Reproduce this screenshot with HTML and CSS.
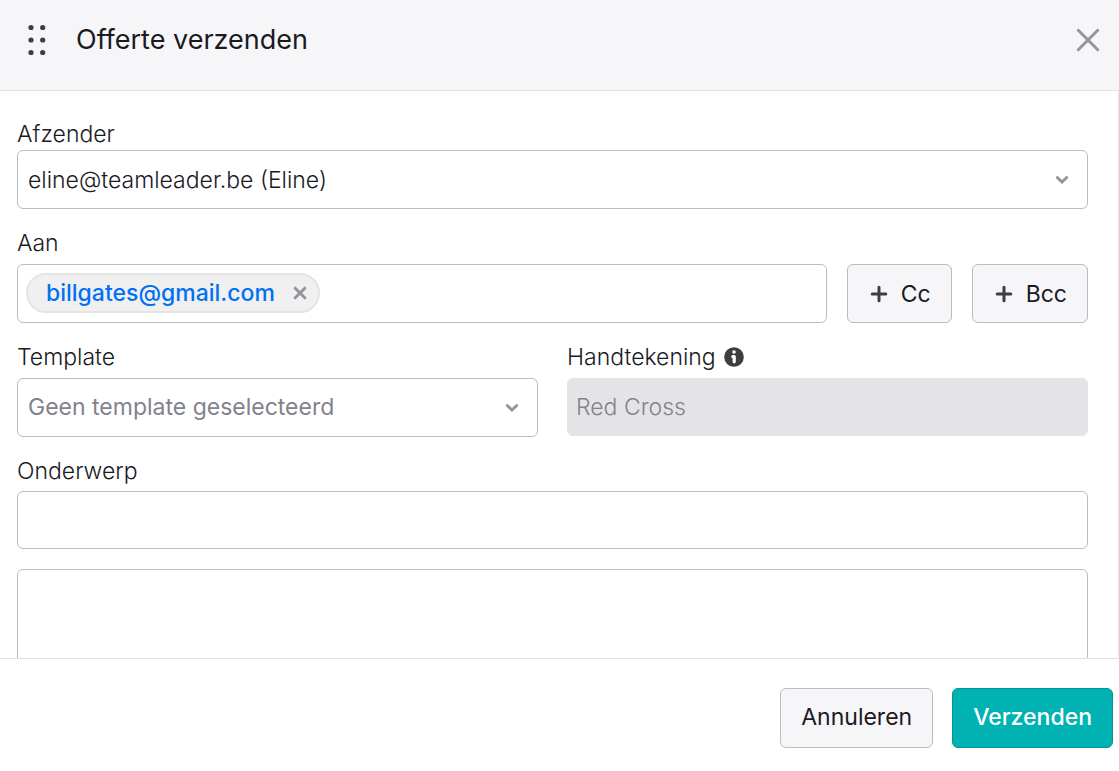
FILE: index.html
```html
<!DOCTYPE html>
<html lang="nl">
<head>
  <meta charset="utf-8">
  <meta name="viewport" content="width=device-width, initial-scale=1">
  <title>Offerte verzenden</title>
  <link rel="stylesheet" href="styles.css">
</head>
<body>
  <form class="dialog" aria-labelledby="dialog-title">
    <header class="dialog-header">
      <svg class="drag-handle" width="20" height="32" viewBox="0 0 20 32" fill="currentColor" aria-hidden="true">
        <circle cx="4" cy="3.5" r="2.6"/><circle cx="15.7" cy="3.5" r="2.6"/>
        <circle cx="4" cy="16" r="2.6"/><circle cx="15.7" cy="16" r="2.6"/>
        <circle cx="4" cy="28.5" r="2.6"/><circle cx="15.7" cy="28.5" r="2.6"/>
      </svg>
      <h1 class="dialog-title" id="dialog-title">Offerte verzenden</h1>
      <button class="icon-button" type="button" aria-label="Sluiten">
        <svg width="24" height="24" viewBox="0 0 24 24" fill="none" stroke="currentColor" stroke-width="3" stroke-linecap="round"><path d="M2.3 2.3 21.7 21.7M21.7 2.3 2.3 21.7"/></svg>
      </button>
    </header>

    <main class="dialog-body">
      <div class="field field-tight">
        <label class="label" for="sender">Afzender</label>
        <div class="select-wrap">
          <select class="control" id="sender"><option>eline@teamleader.be (Eline)</option></select>
          <svg class="chevron" width="14" height="10" viewBox="0 0 14 10" fill="none" stroke="currentColor" stroke-width="3" stroke-linecap="round"><path d="M2.3 2.5 7 7 11.7 2.5"/></svg>
        </div>
      </div>

      <div class="field">
        <label class="label" for="to">Aan</label>
        <div class="recipient-row">
          <div class="control recipients">
            <span class="chip">billgates@gmail.com
              <button class="chip-remove" type="button" aria-label="Verwijderen">
                <svg width="14" height="14" viewBox="0 0 14 14" fill="none" stroke="currentColor" stroke-width="3" stroke-linecap="round"><path d="M2.2 2.2 11.8 11.8M11.8 2.2 2.2 11.8"/></svg>
              </button>
            </span>
            <input class="recipient-input" id="to" type="email">
          </div>
          <button class="button button-add" type="button">
            <svg width="18" height="18" viewBox="0 0 18 18" fill="none" stroke="currentColor" stroke-width="3" stroke-linecap="round"><path d="M9 2.2V15.8M2.2 9H15.8"/></svg>
            Cc
          </button>
          <button class="button button-add" type="button">
            <svg width="18" height="18" viewBox="0 0 18 18" fill="none" stroke="currentColor" stroke-width="3" stroke-linecap="round"><path d="M9 2.2V15.8M2.2 9H15.8"/></svg>
            Bcc
          </button>
        </div>
      </div>

      <div class="columns">
        <div class="field">
          <label class="label" for="template">Template</label>
          <div class="select-wrap">
            <select class="control control-placeholder" id="template"><option>Geen template geselecteerd</option></select>
            <svg class="chevron" width="14" height="10" viewBox="0 0 14 10" fill="none" stroke="currentColor" stroke-width="3" stroke-linecap="round"><path d="M2.3 2.5 7 7 11.7 2.5"/></svg>
          </div>
        </div>
        <div class="field">
          <label class="label" for="signature">Handtekening
            <svg width="20" height="20" viewBox="0 0 20 20" aria-hidden="true"><circle cx="10" cy="10" r="9.8" fill="#3d3d42"/><circle cx="10" cy="5" r="1.8" fill="#fff"/><path d="M8.8 9.6H10.2V14.8" fill="none" stroke="#fff" stroke-width="3.2" stroke-linecap="round" stroke-linejoin="round"/></svg>
          </label>
          <input class="control" id="signature" type="text" value="Red Cross" disabled>
        </div>
      </div>

      <div class="field field-subject">
        <label class="label" for="subject">Onderwerp</label>
        <input class="control" id="subject" type="text">
      </div>
      <textarea class="control message" aria-label="Bericht"></textarea>
    </main>

    <footer class="dialog-footer">
      <button class="button" type="button">Annuleren</button>
      <button class="button button-primary" type="submit">Verzenden</button>
    </footer>
  </form>
</body>
</html>
```
FILE: styles.css
```css
* {
  box-sizing: border-box;
}

body {
  margin: 0;
  background: #fff;
  color: #1a1a1f;
  font: 300 23px/28px Inter, "Liberation Sans", sans-serif;
}

button,
input,
select,
textarea {
  margin: 0;
  font: inherit;
  color: inherit;
}

.dialog {
  display: flex;
  flex-direction: column;
  height: 100vh;
}

.dialog-header {
  display: flex;
  flex: none;
  align-items: center;
  padding: 24px 19px 34px 27px;
  border-bottom: 1px solid #e1e2e5;
  background: #f6f6f9;
}

.drag-handle {
  margin-right: 29px;
  color: #3d3d42;
}

.dialog-title {
  flex: 1;
  margin: 0;
  font-size: 27px;
  line-height: 32px;
  font-weight: 400;
}

.icon-button,
.chip-remove {
  display: flex;
  padding: 0;
  border: 0;
  background: none;
  color: #94949e;
}

.dialog-body {
  display: flex;
  flex: 1;
  flex-direction: column;
  gap: 20px;
  min-height: 0;
  overflow: hidden;
  padding: 29px 30px 0 17px;
  border-right: 1px solid #e8e8eb;
}

.field {
  display: flex;
  flex: none;
  flex-direction: column;
  gap: 7px;
  min-width: 0;
}

.field-tight {
  gap: 2px;
}

.field-subject {
  gap: 6px;
}

.label {
  display: flex;
  align-items: center;
  gap: 8px;
}

.control {
  width: 100%;
  height: 58px;
  padding: 0 10px;
  border: 1px solid #bcbcc0;
  border-radius: 6px;
  background: #fff;
}

.control:disabled {
  padding: 0 8px;
  border-color: #e4e4e6;
  background: #e4e4e6;
  color: #82828c;
}

.select-wrap {
  display: grid;
  align-items: center;
}

.select-wrap > * {
  grid-area: 1 / 1;
}

select.control {
  height: 59px;
  appearance: none;
}

select.control-placeholder {
  padding-bottom: 2px;
  color: #82828c;
  font-weight: 400;
}

.chevron {
  justify-self: end;
  margin-right: 19px;
  color: #94949e;
  pointer-events: none;
}

.recipient-row {
  display: flex;
  gap: 20px;
}

.recipients {
  display: flex;
  flex: 1;
  align-items: center;
  height: 59px;
  min-width: 0;
  padding: 0 8px 2px;
}

.chip {
  display: flex;
  align-items: center;
  gap: 18px;
  height: 40px;
  padding: 0 11px 0 18px;
  border: 2px solid #e4e4e6;
  border-radius: 20px;
  background: #f0f0f0;
  color: #0071f2;
  font-weight: 500;
}

.recipient-input {
  flex: 1;
  min-width: 0;
  border: 0;
  outline: 0;
  background: none;
}

.button {
  display: flex;
  align-items: center;
  justify-content: center;
  height: 60px;
  padding: 0 20px 2px;
  border: 1px solid #bcbcc0;
  border-radius: 6px;
  background: #f6f6f9;
  font-weight: 400;
}

.button-add {
  gap: 13px;
  height: 59px;
  padding: 0 20px 0 22px;
}

.button-add svg {
  color: #3d3d42;
}

.button-primary {
  border-color: #009494;
  background: #00b2b2;
  color: #fff;
  font-weight: 500;
}

.columns {
  display: grid;
  grid-template-columns: 1fr 1fr;
  flex: none;
  gap: 29px;
}

.message {
  flex: none;
  height: 240px;
  padding: 10px;
  resize: none;
}

.dialog-footer {
  display: flex;
  flex: none;
  justify-content: flex-end;
  gap: 19px;
  padding: 29px 6px 23px;
  border-top: 1px solid #e1e2e5;
}
```
